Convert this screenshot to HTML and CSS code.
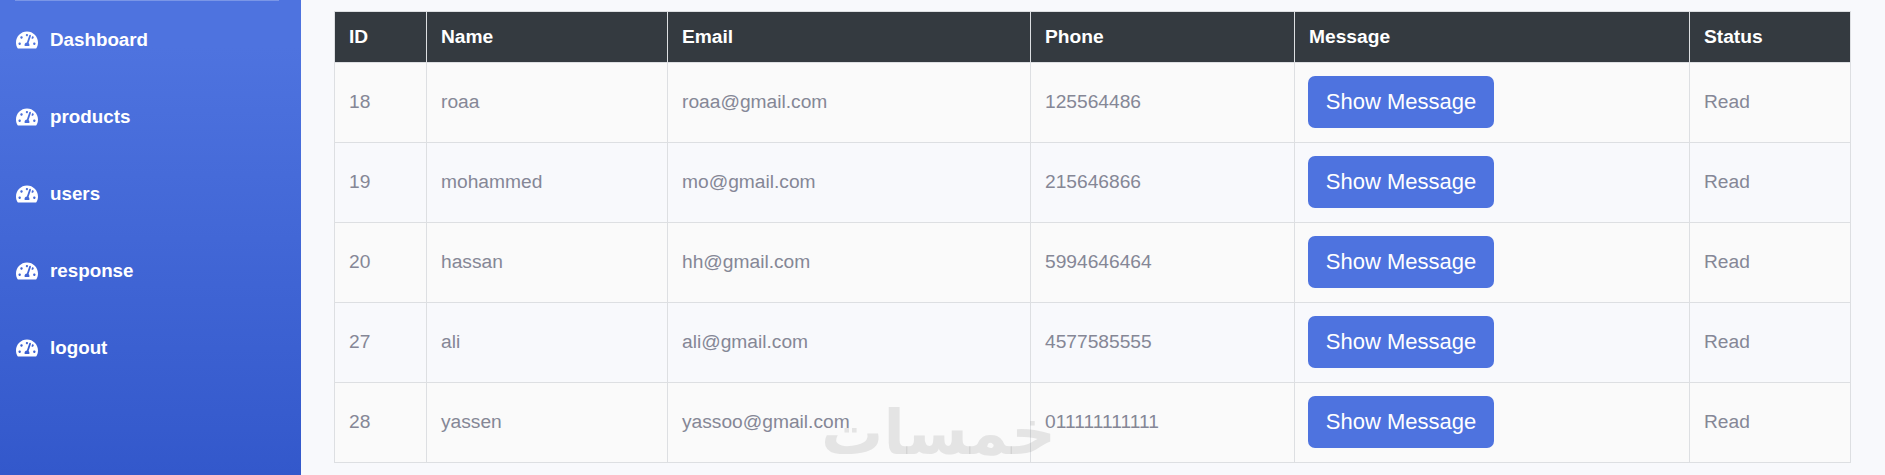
FILE: index.html
```html
<!DOCTYPE html>
<html lang="en">
<head>
<meta charset="utf-8">
<title>Messages</title>
<link rel="stylesheet" href="styles.css">
</head>
<body>
<svg class="defs" width="0" height="0" aria-hidden="true"><symbol id="gauge" viewBox="0 0 576 512"><path d="M288 32C128.94 32 0 160.94 0 320c0 52.8 14.25 102.26 39.06 144.8 5.61 9.62 16.3 15.2 27.44 15.2h443c11.14 0 21.83-5.58 27.44-15.2C561.75 422.26 576 372.8 576 320c0-159.06-128.94-288-288-288zm0 64c14.71 0 26.58 10.13 30.32 23.65-1.11 2.26-2.64 4.23-3.45 6.67l-9.22 27.67c-5.13 3.49-10.97 6.01-17.64 6.01-17.67 0-32-14.33-32-32S270.33 96 288 96zM96 384c-17.67 0-32-14.33-32-32s14.33-32 32-32 32 14.33 32 32-14.33 32-32 32zm48-160c-17.67 0-32-14.33-32-32s14.33-32 32-32 32 14.33 32 32-14.33 32-32 32zm246.77-72.41l-61.33 184C343.13 347.33 352 364.54 352 384c0 11.72-3.38 22.55-8.88 32H232.88c-5.5-9.45-8.88-20.28-8.88-32 0-33.94 26.5-61.43 59.9-63.59l61.34-184.01c4.17-12.56 17.73-19.45 30.36-15.17 12.57 4.19 19.35 17.77 15.17 30.36zm14.66 57.2l15.52-46.55c3.47-1.29 7.13-2.23 11.05-2.23 17.67 0 32 14.33 32 32s-14.33 32-32 32c-11.38-.01-20.89-6.28-26.57-15.22zM480 384c-17.67 0-32-14.33-32-32s14.33-32 32-32 32 14.33 32 32-14.33 32-32 32z"/></symbol></svg>
<div class="page">
  <aside class="sidebar">
    <hr class="divider">
    <nav class="nav">
      <a class="nav-link" href="#"><svg class="icon"><use href="#gauge"/></svg><span>Dashboard</span></a>
      <a class="nav-link" href="#"><svg class="icon"><use href="#gauge"/></svg><span>products</span></a>
      <a class="nav-link" href="#"><svg class="icon"><use href="#gauge"/></svg><span>users</span></a>
      <a class="nav-link" href="#"><svg class="icon"><use href="#gauge"/></svg><span>response</span></a>
      <a class="nav-link" href="#"><svg class="icon"><use href="#gauge"/></svg><span>logout</span></a>
    </nav>
  </aside>
  <main class="content">
    <table class="table">
      <colgroup>
        <col class="c-id"><col class="c-name"><col class="c-email"><col class="c-phone"><col class="c-msg"><col class="c-status">
      </colgroup>
      <thead>
        <tr><th>ID</th><th>Name</th><th>Email</th><th>Phone</th><th>Message</th><th>Status</th></tr>
      </thead>
      <tbody>
        <tr><td>18</td><td>roaa</td><td>roaa@gmail.com</td><td>125564486</td><td><button class="btn">Show Message</button></td><td>Read</td></tr>
        <tr><td>19</td><td>mohammed</td><td>mo@gmail.com</td><td>215646866</td><td><button class="btn">Show Message</button></td><td>Read</td></tr>
        <tr><td>20</td><td>hassan</td><td>hh@gmail.com</td><td>5994646464</td><td><button class="btn">Show Message</button></td><td>Read</td></tr>
        <tr><td>27</td><td>ali</td><td>ali@gmail.com</td><td>4577585555</td><td><button class="btn">Show Message</button></td><td>Read</td></tr>
        <tr><td>28</td><td>yassen</td><td>yassoo@gmail.com</td><td>011111111111</td><td><button class="btn">Show Message</button></td><td>Read</td></tr>
      </tbody>
    </table>
    <div class="watermark" lang="ar" dir="rtl">خمسات</div>
  </main>
</div>
</body>
</html>
```
FILE: styles.css
```css
* { box-sizing: border-box; }
html, body { margin: 0; height: 100%; }
body {
  background: #f8f9fc;
  font-family: "Liberation Sans", Arial, sans-serif;
  overflow: hidden;
}
.defs { position: absolute; }
.page { display: flex; height: 475px; }
.sidebar {
  width: 301px;
  flex: none;
  background: linear-gradient(180deg, #4e73df 10%, #3358cb 100%);
  padding: 0 22px 0 15px;
}
.divider {
  margin: 0;
  border: 0;
  border-top: 1px solid rgba(255, 255, 255, .25);
}
.nav { display: flex; flex-direction: column; gap: 45px; padding: 23px 0 0 1px; }
.nav-link {
  display: flex;
  align-items: center;
  height: 32px;
  color: #fff;
  font-size: 18.8px;
  font-weight: 700;
  line-height: 32px;
  text-decoration: none;
}
.icon { width: 22px; height: 20px; margin-right: 12px; fill: #fff; flex: none; }
.content { position: relative; flex: 1; padding: 11px 35px 0 33px; }
.table {
  width: 1516px;
  table-layout: fixed;
  border-collapse: collapse;
  font-size: 19.2px;
  color: #858796;
}
.c-id { width: 92px; }
.c-name { width: 241px; }
.c-email { width: 363px; }
.c-phone { width: 264px; }
.c-msg { width: 395px; }
.c-status { width: 161px; }
th, td {
  border: 1px solid #dddfe2;
  padding: 0 14px;
  text-align: left;
  vertical-align: middle;
  white-space: nowrap;
}
th {
  height: 51px;
  background: #343a40;
  color: #fff;
  font-weight: 700;
}
td { height: 80px; padding-bottom: 2px; }
td:nth-child(5) { padding-left: 13px; }
tbody tr:nth-child(odd) { background: #fafafa; }
.btn {
  display: block;
  width: 186px;
  height: 52px;
  padding: 0;
  border: 0;
  border-radius: 7px;
  background: #4e73df;
  color: #fff;
  font: 400 22px "Liberation Sans", Arial, sans-serif;
}
.watermark {
  position: absolute;
  left: 529px;
  top: 398px;
  width: 226px;
  color: rgba(120, 120, 120, .16);
  font: 700 62px/70px "DejaVu Sans", sans-serif;
  text-align: center;
  pointer-events: none;
}
```
